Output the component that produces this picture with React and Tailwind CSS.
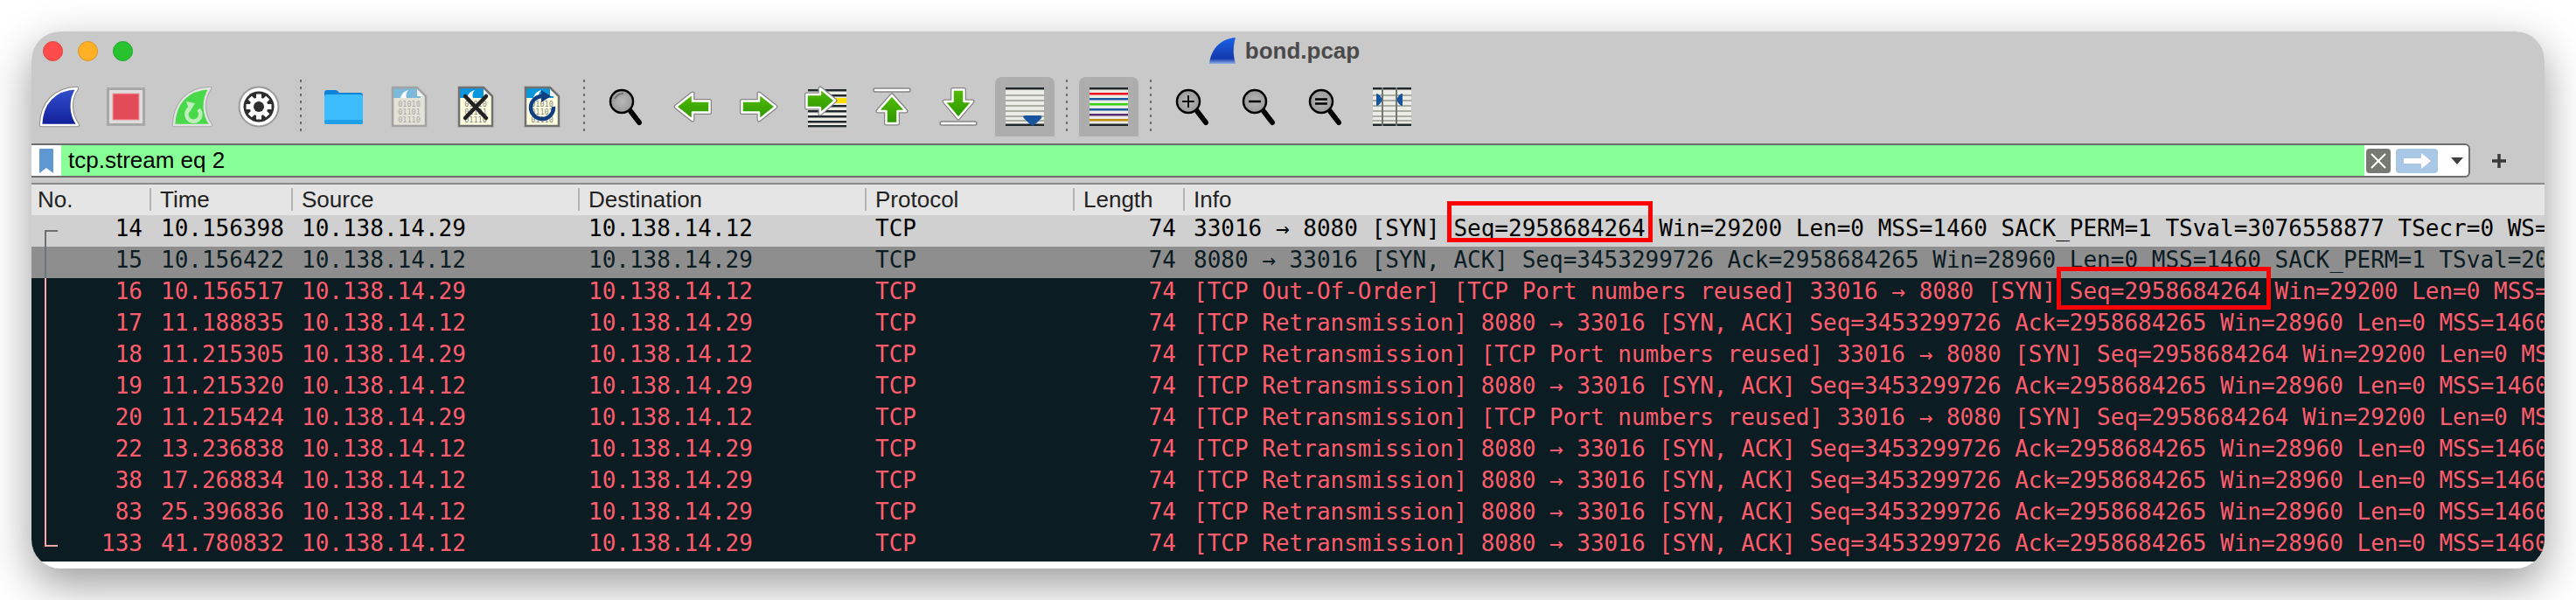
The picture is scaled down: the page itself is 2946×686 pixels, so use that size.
import React from "react";

const synAck = "8080 → 33016 [SYN, ACK] Seq=3453299726 Ack=2958684265 Win=28960 Len=0 MSS=1460 SACK_PERM=1 TSval=2030148855";
const reused = "[TCP Retransmission] [TCP Port numbers reused] 33016 → 8080 [SYN] Seq=2958684264 Win=29200 Len=0 MSS=1460 SACK_PERM=1";
const retrans = "[TCP Retransmission] " + synAck;

const packets = [
  { no: 14, time: "10.156398", src: "10.138.14.29", dst: "10.138.14.12", info: "33016 → 8080 [SYN] Seq=2958684264 Win=29200 Len=0 MSS=1460 SACK_PERM=1 TSval=3076558877 TSecr=0 WS=128", kind: "first" },
  { no: 15, time: "10.156422", src: "10.138.14.12", dst: "10.138.14.29", info: synAck, kind: "selected" },
  { no: 16, time: "10.156517", src: "10.138.14.29", dst: "10.138.14.12", info: "[TCP Out-Of-Order] [TCP Port numbers reused] 33016 → 8080 [SYN] Seq=2958684264 Win=29200 Len=0 MSS=1460 SACK_PERM=1" },
  { no: 17, time: "11.188835", src: "10.138.14.12", dst: "10.138.14.29", info: retrans },
  { no: 18, time: "11.215305", src: "10.138.14.29", dst: "10.138.14.12", info: reused },
  { no: 19, time: "11.215320", src: "10.138.14.12", dst: "10.138.14.29", info: retrans },
  { no: 20, time: "11.215424", src: "10.138.14.29", dst: "10.138.14.12", info: reused },
  { no: 22, time: "13.236838", src: "10.138.14.12", dst: "10.138.14.29", info: retrans },
  { no: 38, time: "17.268834", src: "10.138.14.12", dst: "10.138.14.29", info: retrans },
  { no: 83, time: "25.396836", src: "10.138.14.12", dst: "10.138.14.29", info: retrans },
  { no: 133, time: "41.780832", src: "10.138.14.12", dst: "10.138.14.29", info: retrans, kind: "last" },
];

const columns = ["No.", "Time", "Source", "Destination", "Protocol", "Length", "Info"];

function Svg({ children }) {
  return (
    <svg width="48" height="48" viewBox="0 0 48 48" className="block shrink-0">
      {children}
    </svg>
  );
}

function Defs() {
  return (
    <svg width="0" height="0" className="absolute">
      <defs>
        <linearGradient id="blueFin" x1="0" y1="0" x2="0" y2="1">
          <stop offset="0" stopColor="#3450cf" />
          <stop offset="1" stopColor="#101f98" />
        </linearGradient>
        <linearGradient id="greenArrow" x1="0" y1="0" x2="0" y2="1">
          <stop offset="0" stopColor="#54bd06" />
          <stop offset="1" stopColor="#2b9600" />
        </linearGradient>
        <radialGradient id="lens" cx="0.5" cy="0.5" r="0.6">
          <stop offset="0" stopColor="#b8b8b8" />
          <stop offset="1" stopColor="#949494" />
        </radialGradient>
      </defs>
    </svg>
  );
}

const finPath = "M3 45 C4 20 18 4 44 3 C35 16 36 33 45 45 Z";

function Fin({ outer, inner, fill, children }) {
  return (
    <Svg>
      <path d={finPath} fill="none" stroke={outer} strokeWidth="4.5" strokeLinejoin="round" />
      <path d={finPath} fill={fill} stroke={inner} strokeWidth="2.5" strokeLinejoin="round" />
      {children}
    </Svg>
  );
}

function StopIcon() {
  return (
    <Svg>
      <rect x="3.5" y="3.5" width="41" height="41" fill="#dedede" stroke="#a8a8a8" strokeWidth="3" />
      <rect x="9" y="9" width="30" height="30" fill="#e24c59" stroke="#ee9aa0" strokeWidth="1" />
    </Svg>
  );
}

function GearIcon() {
  const teeth = [0, 45, 90, 135, 180, 225, 270, 315];
  return (
    <Svg>
      <circle cx="24" cy="24" r="23.5" fill="#9a9a9a" />
      <circle cx="24" cy="24" r="21.5" fill="#fff" />
      <circle cx="24" cy="24" r="17.5" fill="#2d2d2d" />
      {teeth.map((a) => (
        <rect key={a} x="21" y="9.5" width="6" height="6" fill="#fff" transform={`rotate(${a} 24 24)`} />
      ))}
      <circle cx="24" cy="24" r="10.5" fill="#fff" />
      <circle cx="24" cy="24" r="6" fill="#2d2d2d" />
    </Svg>
  );
}

function FolderIcon() {
  return (
    <Svg>
      <path d="M3 8 Q3 5 6 5 H16 Q18 5 20 8 H44 Q47 8 47 11 V20 H3 Z" fill="#0a84d8" />
      <path d="M3 13 Q3 10 6 10 H44 Q47 10 47 13 V41 Q47 44 44 44 H6 Q3 44 3 41 Z" fill="#3dbdfd" />
      <rect x="3" y="39" width="44" height="5" rx="2" fill="#1f9fe8" />
    </Svg>
  );
}

function DocIcon({ faded, children }) {
  const top = faded ? "#7cbadb" : "#0a97de";
  const page = faded ? "#e2e2d6" : "#fdfde0";
  const edge = faded ? "#a3a3a3" : "#717171";
  const ink = faded ? "#a9a9a9" : "#8a8a80";
  return (
    <Svg>
      <path d="M5 2 H33 L43 12 V46 H5 Z" fill={page} />
      <path d="M5 2 H33 L37 7 V14 H5 Z" fill={top} />
      <path d="M14 14 C15 9 19 6 23 5 C20 8 20 11 21 14 Z" fill="#fff" />
      <path d="M33 2 L33 12 H43 Z" fill="#f4f4f4" />
      <path d="M5 2 H33 L43 12 V46 H5 Z" fill="none" stroke={edge} strokeWidth="2.5" />
      <text x="24" y="24" textAnchor="middle" fontSize="8.5" fontFamily="DejaVu Sans Mono, monospace" fill={ink}>01010</text>
      <text x="24" y="33" textAnchor="middle" fontSize="8.5" fontFamily="DejaVu Sans Mono, monospace" fill={ink}>01101</text>
      <text x="24" y="42" textAnchor="middle" fontSize="8.5" fontFamily="DejaVu Sans Mono, monospace" fill={ink}>01110</text>
      {children}
    </Svg>
  );
}

function SearchIcon({ mark }) {
  return (
    <Svg>
      <path d="M29 29 L39 42" stroke="#000" strokeWidth="6" strokeLinecap="round" />
      <circle cx="19" cy="18" r="13" fill="url(#lens)" stroke="#000" strokeWidth="2.5" />
      {mark === "plus" && <path d="M12 18 H26 M19 11 V25" stroke="#000" strokeWidth="2" />}
      {mark === "minus" && <path d="M12 18 H26" stroke="#000" strokeWidth="2.5" />}
      {mark === "equal" && <path d="M12 15.5 H26 M12 20.5 H26" stroke="#000" strokeWidth="2.5" />}
      {!mark && <path d="M11 15 Q14 9 21 9" stroke="#666" strokeWidth="1.5" fill="none" />}
    </Svg>
  );
}

function ArrowShape({ points, transform }) {
  return (
    <g transform={transform}>
      <polygon points={points} fill="none" stroke="#858585" strokeWidth="5" strokeLinejoin="round" />
      <polygon points={points} fill="url(#greenArrow)" stroke="#fff" strokeWidth="2.5" strokeLinejoin="round" />
    </g>
  );
}

const sideArrow = "4.5,17.5 24,17.5 24,9 43,24 24,39 24,30.5 4.5,30.5";
const gotoArrow = "2.5,10 18,10 18,3 35,17 18,32 18,25 2.5,25";
const downArrow = "17.5,4.5 30.5,4.5 30.5,18 40,18 24,37 8,18 17.5,18";
const upArrow = "17.5,43 30.5,43 30.5,29 40,29 24,11 8,29 17.5,29";

function SideArrowIcon({ left }) {
  return (
    <Svg>
      <ArrowShape points={sideArrow} transform={left ? "translate(48 0) scale(-1 1)" : undefined} />
    </Svg>
  );
}

function GoToIcon() {
  return (
    <Svg>
      <rect x="4" y="4" width="44" height="44" fill="#ecece6" />
      {[4, 10, 16, 22, 28, 34, 40, 45].map((y) => (
        <rect key={y} x="4" y={y} width="44" height="2.5" fill="#20282c" />
      ))}
      <rect x="32" y="14" width="16" height="6" fill="#ffdf00" />
      <ArrowShape points={gotoArrow} />
    </Svg>
  );
}

function EdgeArrowIcon({ up }) {
  return (
    <Svg>
      <rect x="3" y={up ? 3 : 41} width="42" height="4" rx="2" fill="#fff" stroke="#858585" strokeWidth="1.5" />
      <ArrowShape points={up ? upArrow : downArrow} />
    </Svg>
  );
}

function LinesIcon({ children }) {
  return (
    <Svg>
      <rect x="2" y="2" width="44" height="44" fill="#ecece6" />
      <rect x="2" y="2" width="44" height="2.5" fill="#20282c" />
      <rect x="2" y="43.5" width="44" height="2.5" fill="#20282c" />
      {children}
    </Svg>
  );
}

function GreyBars() {
  return [10, 16, 22, 28, 34, 39].map((y) => (
    <rect key={y} x="2" y={y} width="44" height="2" fill="#a9ada2" />
  ));
}

function AutoScrollIcon() {
  return (
    <LinesIcon>
      <GreyBars />
      <path d="M22 36 Q22 34 25 34 H41 Q44 34 43 37 Q38 43 33 46 Q28 43 22 36 Z" fill="#16549e" />
    </LinesIcon>
  );
}

function ColorizeIcon() {
  const bars = [
    [8, "#ee0f1f"],
    [14, "#1a5aa3"],
    [20, "#36d014"],
    [26, "#1a5aa3"],
    [32, "#5b2d74"],
    [38, "#c18c0c"],
  ];
  return (
    <LinesIcon>
      {bars.map(([y, c]) => (
        <rect key={y} x="2" y={y} width="44" height="2.5" fill={c} />
      ))}
    </LinesIcon>
  );
}

function ResizeIcon() {
  return (
    <LinesIcon>
      <GreyBars />
      <rect x="12" y="2" width="2" height="44" fill="#73776f" />
      <rect x="28" y="2" width="2" height="44" fill="#73776f" />
      <path d="M6 9 Q9 9 12 14 Q13.5 16 12 18 Q9 23 6 23 Z" fill="#16549e" />
      <path d="M36 9 Q33 9 30 14 Q28.5 16 30 18 Q33 23 36 23 Z" fill="#16549e" />
    </LinesIcon>
  );
}

function Sep() {
  return <div className="-mx-[5px] h-[62px] w-[2px] shrink-0 bg-[repeating-linear-gradient(to_bottom,#6d6d6d_0,#6d6d6d_3px,transparent_3px,transparent_8px)]" />;
}

function Active({ children }) {
  return (
    <div className="-mx-[10px] flex h-[68px] w-[68px] shrink-0 items-center justify-center rounded-t-lg bg-[#adadad]">
      {children}
    </div>
  );
}

function Toolbar() {
  return (
    <div className="flex h-[84px] items-center gap-[28px] pl-[8px]">
      <Fin outer="#8c8c8c" inner="#fff" fill="url(#blueFin)" />
      <StopIcon />
      <Fin outer="#a9a9a9" inner="#e2e2e2" fill="#47d94a">
        <path d="M21 26 A8 8 0 1 0 31 27" fill="none" stroke="#bfeebc" strokeWidth="4.5" />
        <path d="M17 18 L27 20 L21 30 Z" fill="#bfeebc" />
      </Fin>
      <GearIcon />
      <Sep />
      <FolderIcon />
      <DocIcon faded />
      <DocIcon>
        <path d="M12 12 L36 37 M36 12 L12 37" stroke="#222" strokeWidth="4.5" strokeLinecap="round" />
      </DocIcon>
      <DocIcon>
        <path d="M25 12 A13 13 0 1 0 37 24" fill="none" stroke="#0f3f80" strokeWidth="4.5" />
        <path d="M23 5 L34 12 L23 19 Z" fill="#0f3f80" />
      </DocIcon>
      <Sep />
      <SearchIcon />
      <SideArrowIcon left />
      <SideArrowIcon />
      <GoToIcon />
      <EdgeArrowIcon up />
      <EdgeArrowIcon />
      <Active>
        <AutoScrollIcon />
      </Active>
      <Sep />
      <Active>
        <ColorizeIcon />
      </Active>
      <Sep />
      <SearchIcon mark="plus" />
      <SearchIcon mark="minus" />
      <SearchIcon mark="equal" />
      <ResizeIcon />
    </div>
  );
}

function FilterBar() {
  return (
    <div className="flex h-[39px] items-center">
      <div className="flex h-full w-[2789px] shrink-0 overflow-hidden rounded-r-md border-y-2 border-r-2 border-[#6e6e6e] bg-white">
        <div className="flex w-[34px] shrink-0 items-center justify-center">
          <svg width="16" height="28" viewBox="0 0 16 28">
            <path d="M0 1 Q0 0 1 0 H15 Q16 0 16 1 V28 L8 22 L0 28 Z" fill="#5f97d2" />
          </svg>
        </div>
        <div className="flex-1 bg-[#89ff97] pl-[8px] text-[26px] leading-[35px] text-black">tcp.stream eq 2</div>
        <div className="flex w-[119px] shrink-0 items-center">
          <div className="ml-[2px] flex h-[28px] w-[28px] items-center justify-center rounded bg-[#777a72]">
            <svg width="20" height="20" viewBox="0 0 20 20">
              <path d="M2 2 L18 18 M18 2 L2 18" stroke="#fff" strokeWidth="2" />
            </svg>
          </div>
          <div className="ml-[6px] flex h-[28px] w-[48px] items-center justify-center rounded bg-[#a8c8e6]">
            <svg width="32" height="18" viewBox="0 0 32 18">
              <path d="M1 6 H21 V0 L32 9 L21 18 V12 H1 Z" fill="#fff" />
            </svg>
          </div>
          <svg width="14" height="8" viewBox="0 0 14 8" className="ml-[15px]">
            <path d="M0 0 H14 L7 8 Z" fill="#3f3f3f" />
          </svg>
        </div>
      </div>
      <div className="ml-[25px] text-[0px]">
        <svg width="16" height="16" viewBox="0 0 16 16">
          <path d="M8 0 V16 M0 8 H16" stroke="#3a3a3a" strokeWidth="3.5" />
        </svg>
      </div>
    </div>
  );
}

const gridCols = "grid grid-cols-[137px_162px_328px_328px_238px_126px_minmax(0,1fr)]";

function HeaderRow() {
  return (
    <div className={`${gridCols} h-[35px] bg-[#e5e5e5] text-[26px] leading-[35px] text-[#222]`}>
      {columns.map((c, i) => (
        <div key={c} className={i === 0 ? "relative pl-[7px]" : "relative pl-[10px]"}>
          {c}
          {i < columns.length - 1 && <span className="absolute top-[4px] right-0 h-[26px] w-[2px] bg-[#b3b3b3]" />}
        </div>
      ))}
    </div>
  );
}

function PacketRow({ p }) {
  let tone = "bg-[#0c1c23] text-[#ff5c6c]";
  let line = "bg-[#ffa6ab]";
  if (p.kind === "first") {
    tone = "bg-[#d0d0d0] text-black";
    line = "bg-[#6f6f6f]";
  }
  if (p.kind === "selected") {
    tone = "bg-[#8e8e8e] text-[#0c1c23]";
    line = "bg-[#64777d]";
  }
  return (
    <div className={`${gridCols} relative h-[36px] overflow-hidden font-["DejaVu_Sans_Mono",monospace] text-[26px] leading-[30px] whitespace-nowrap ${tone}`}>
      {p.kind === "first" && <span className={`absolute top-[17px] bottom-0 left-[15px] w-[2px] ${line}`} />}
      {p.kind === "first" && <span className={`absolute top-[17px] left-[15px] h-[2px] w-[15px] ${line}`} />}
      {p.kind === "last" && <span className={`absolute top-0 bottom-[17px] left-[15px] w-[2px] ${line}`} />}
      {p.kind === "last" && <span className={`absolute bottom-[17px] left-[15px] h-[2px] w-[15px] ${line}`} />}
      {p.kind !== "first" && p.kind !== "last" && <span className={`absolute inset-y-0 left-[15px] w-[2px] ${line}`} />}
      <div className="pr-[10px] text-right">{p.no}</div>
      <div className="pl-[11px]">{p.time}</div>
      <div className="pl-[10px]">{p.src}</div>
      <div className="pl-[10px]">{p.dst}</div>
      <div className="pl-[10px]">TCP</div>
      <div className="pr-[10px] text-right">74</div>
      <div className="overflow-hidden pl-[10px]">{p.info}</div>
    </div>
  );
}

export default function App() {
  return (
    <div className="h-[686px] overflow-hidden bg-white pt-[36px] pl-[36px] font-['Liberation_Sans',sans-serif]">
      <Defs />
      <div className="relative h-[614px] w-[2874px] overflow-hidden rounded-[33px] bg-white shadow-[0_18px_50px_rgba(0,0,0,0.4)]">
        <div className="bg-[#c9c9c9]">
          <div className="grid h-[44px] grid-cols-[1fr_auto_1fr] items-center">
            <div className="flex items-center gap-[17px] pl-[13px]">
              <span className="h-[23px] w-[23px] rounded-full border border-[#e0443e] bg-[#ff4b4b]" />
              <span className="h-[23px] w-[23px] rounded-full border border-[#dc9420] bg-[#ffb025]" />
              <span className="h-[23px] w-[23px] rounded-full border border-[#1aab29] bg-[#28c22f]" />
            </div>
            <div className="-ml-[9px] flex items-center gap-[10px]">
              <svg width="32" height="32" viewBox="0 0 32 32">
                <defs>
                  <linearGradient id="titleFin" x1="0" y1="0" x2="0" y2="1">
                    <stop offset="0" stopColor="#1c62e6" />
                    <stop offset="0.8" stopColor="#1238ad" />
                    <stop offset="1" stopColor="#8fb0e6" />
                  </linearGradient>
                </defs>
                <path d="M1 31 C3 14 14 2 31 1 C28 11 28 21 31 31 Z" fill="url(#titleFin)" />
              </svg>
              <span className="text-[26px] font-bold text-[#4a4a4a]">bond.pcap</span>
            </div>
            <div />
          </div>
          <Toolbar />
          <FilterBar />
          <div className="mt-[6px] h-[2px] bg-[#8a8a8a]" />
        </div>
        <HeaderRow />
        {packets.map((p) => (
          <PacketRow key={p.no} p={p} />
        ))}
        <div className="absolute top-[194px] left-[1619px] h-[47px] w-[235px] border-[5px] border-[#f00]" />
        <div className="absolute top-[269px] left-[2316px] h-[49px] w-[245px] border-[5px] border-[#f00]" />
      </div>
    </div>
  );
}
